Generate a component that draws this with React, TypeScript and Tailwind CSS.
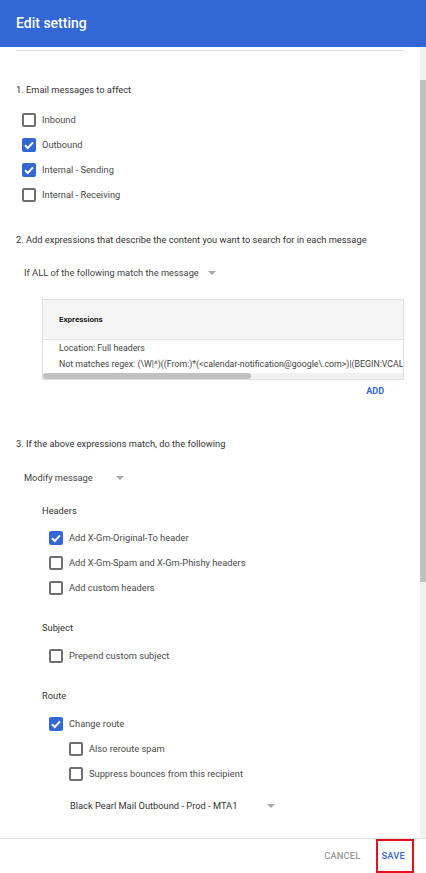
import type { ReactNode } from "react";

const font = { fontFamily: "Roboto, 'Liberation Sans', sans-serif" };

const Box = ({ checked }: { checked?: boolean }) =>
  checked ? (
    <span className="flex h-[14px] w-[14px] shrink-0 items-center justify-center rounded-[2px] bg-[#3367d6]">
      <svg viewBox="0 0 14 14" className="h-[14px] w-[14px]">
        <path d="M3 7.2 L5.8 10 L11 4.4" fill="none" stroke="#fff" strokeWidth="2" />
      </svg>
    </span>
  ) : (
    <span className="h-[14px] w-[14px] shrink-0 rounded-[2px] border-2 border-[#6f6f6f] bg-white" />
  );

const Check = ({ label, checked, className = "" }: { label: string; checked?: boolean; className?: string }) => (
  <div className={"flex h-[25px] items-center gap-[6px] " + className}>
    <Box checked={checked} />
    <span className="text-[9.3px] text-[#4a4a4a]">{label}</span>
  </div>
);

const Arrow = () => (
  <svg viewBox="0 0 8 4" className="h-[4px] w-[8px]">
    <path d="M0 0 H8 L4 4 Z" fill="#a8a8a8" />
  </svg>
);

const Line = ({ children, className = "" }: { children: ReactNode; className?: string }) => (
  <div className={"flex h-[20px] items-center text-[9.3px] text-[#333] " + className}>{children}</div>
);

export default function App() {
  return (
    <div style={font} className="flex h-[873px] w-[426px] flex-col overflow-hidden bg-white">
      <div className="flex h-[47px] shrink-0 items-center bg-[#3367d6] px-4">
        <span className="text-[14px] font-medium text-white">Edit setting</span>
      </div>

      <div className="flex min-h-0 flex-1">
        <div className="min-w-0 flex-1 overflow-hidden px-4 pt-[3px]">
          <div className="h-px bg-[#dedede]" />

          <Line className="mt-[29px]">1. Email messages to affect</Line>
          <div className="mt-[7px] pl-[6px]">
            <Check label="Inbound" />
            <Check label="Outbound" checked />
            <Check label="Internal - Sending" checked />
            <Check label="Internal - Receiving" />
          </div>

          <Line className="mt-[23px]">2. Add expressions that describe the content you want to search for in each message</Line>
          <Line className="mt-[13px] gap-[9px] pl-[8px] text-[#444]">
            If ALL of the following match the message
            <Arrow />
          </Line>

          <div className="mt-[16px] ml-[26px] border border-[#e0e0e0]">
            <div className="flex h-[39px] items-center bg-[#f5f5f5] pl-4 text-[8px] font-bold text-[#222]">
              Expressions
            </div>
            <div className="border-t border-[#e4e4e4] pt-[1px] text-[8.8px] text-[#444]">
              <div className="flex h-[16px] items-center pl-4 whitespace-nowrap">Location: Full headers</div>
              <div className="flex h-[16px] items-center overflow-hidden pl-4 whitespace-nowrap">
                Not matches regex: (\W|^)((From:)*(&lt;calendar-notification@google\.com&gt;)|(BEGIN:VCALE
              </div>
              <div className="h-[6px] bg-[#f1f1f1]">
                <div className="h-[6px] w-[208px] rounded-[3px] bg-[#c1c1c1]" />
              </div>
            </div>
          </div>
          <div className="mt-[2px] flex h-[20px] items-center justify-end pr-[20px] text-[9px] font-bold text-[#3367d6]">
            ADD
          </div>

          <Line className="mt-[32px]">3. If the above expressions match, do the following</Line>
          <Line className="mt-[14px] gap-[23px] pl-[8px] text-[#444]">
            Modify message
            <Arrow />
          </Line>

          <div className="pl-[26px]">
            <Line className="mt-[13px]">Headers</Line>
            <div className="mt-[4px] pl-[7px]">
              <Check label="Add X-Gm-Original-To header" checked />
              <Check label="Add X-Gm-Spam and X-Gm-Phishy headers" />
              <Check label="Add custom headers" />
            </div>

            <Line className="mt-[18px]">Subject</Line>
            <div className="mt-[5px] pl-[7px]">
              <Check label="Prepend custom subject" />
            </div>

            <Line className="mt-[18px]">Route</Line>
            <div className="mt-[5px] pl-[7px]">
              <Check label="Change route" checked />
              <div className="pl-[20px]">
                <Check label="Also reroute spam" />
                <Check label="Suppress bounces from this recipient" />
              </div>
            </div>

            <Line className="mt-[10px] gap-[30px] pl-[28px] text-[#222]">
              Black Pearl Mail Outbound - Prod - MTA1
              <Arrow />
            </Line>
          </div>
        </div>

        <div className="w-[6px] shrink-0 bg-[#f1f1f1] pt-[33px]">
          <div className="h-[502px] bg-[#c1c1c1]" />
        </div>
      </div>

      <div className="flex h-[35px] shrink-0 items-center justify-end gap-[21px] border-t border-[#e0e0e0] pr-[21px] text-[9.3px] font-medium tracking-[0.2px]">
        <span className="text-[#9a9a9a]">CANCEL</span>
        <span className="relative text-[#3367d6]">
          SAVE
          <span className="absolute -top-[10px] -right-[9px] -bottom-[10px] -left-[6px] border-2 border-[#e8101a]" />
        </span>
      </div>
    </div>
  );
}
